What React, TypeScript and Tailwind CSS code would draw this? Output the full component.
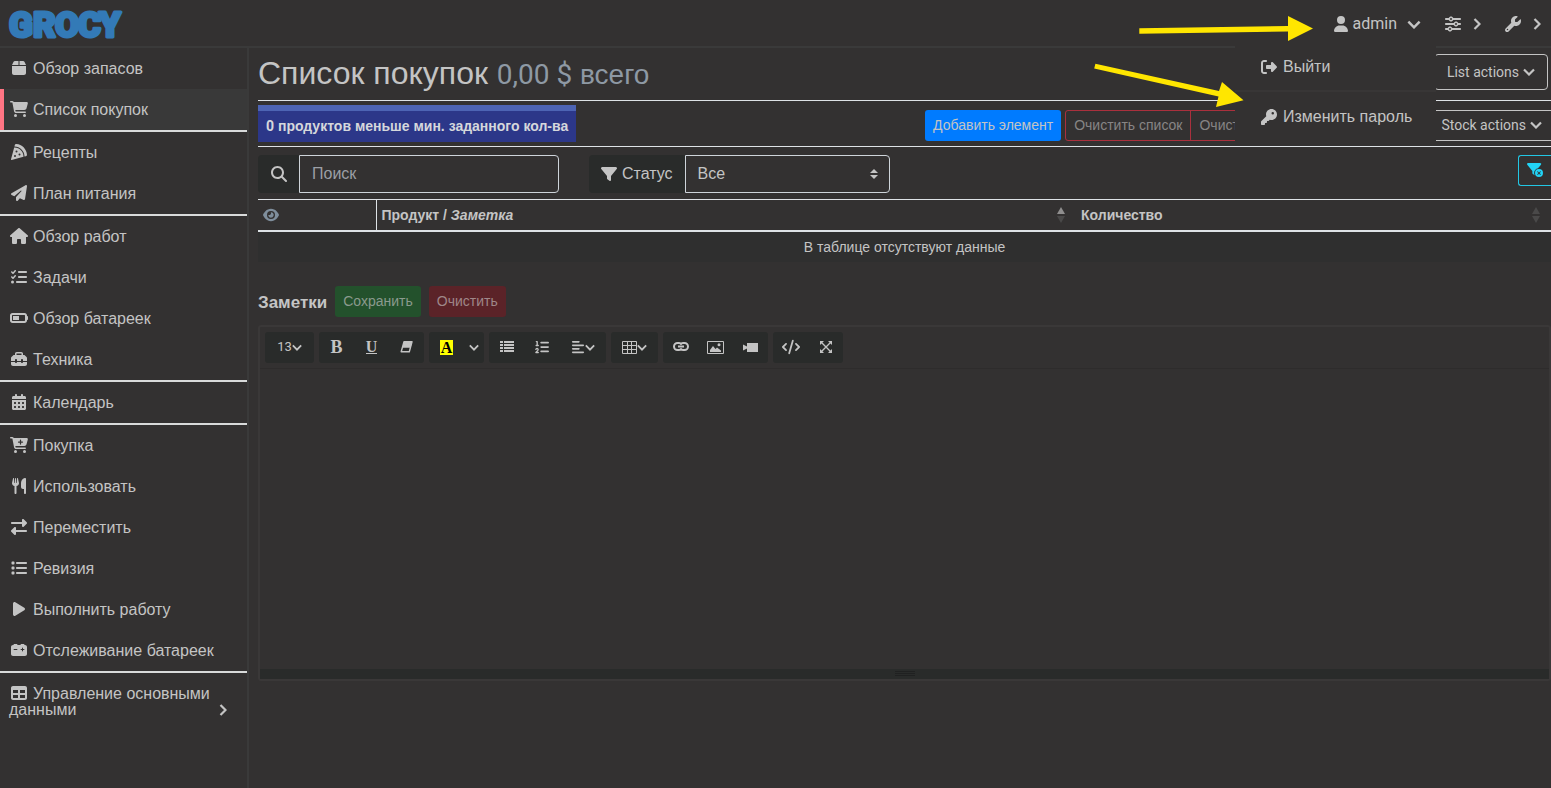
import type { ReactNode } from 'react';
import type { IconType } from 'react-icons';
import {
  FaAlignLeft,
  FaBatteryHalf,
  FaBox,
  FaCalendarDays,
  FaCarBattery,
  FaCartPlus,
  FaCartShopping,
  FaCode,
  FaEye,
  FaFilter,
  FaFilterCircleXmark,
  FaHouse,
  FaKey,
  FaList,
  FaListCheck,
  FaListOl,
  FaMagnifyingGlass,
  FaPaperPlane,
  FaPizzaSlice,
  FaPlay,
  FaRightFromBracket,
  FaRightLeft,
  FaSliders,
  FaTable,
  FaToolbox,
  FaUser,
  FaUtensils,
  FaWrench,
} from 'react-icons/fa6';

type NavItem = { label: string; icon: IconType; active?: boolean };

const navGroups: NavItem[][] = [
  [
    { label: 'Обзор запасов', icon: FaBox },
    { label: 'Список покупок', icon: FaCartShopping, active: true },
  ],
  [
    { label: 'Рецепты', icon: FaPizzaSlice },
    { label: 'План питания', icon: FaPaperPlane },
  ],
  [
    { label: 'Обзор работ', icon: FaHouse },
    { label: 'Задачи', icon: FaListCheck },
    { label: 'Обзор батареек', icon: FaBatteryHalf },
    { label: 'Техника', icon: FaToolbox },
  ],
  [{ label: 'Календарь', icon: FaCalendarDays }],
  [
    { label: 'Покупка', icon: FaCartPlus },
    { label: 'Использовать', icon: FaUtensils },
    { label: 'Переместить', icon: FaRightLeft },
    { label: 'Ревизия', icon: FaList },
    { label: 'Выполнить работу', icon: FaPlay },
    { label: 'Отслеживание батареек', icon: FaCarBattery },
  ],
];

const roboto = "font-['Roboto','Liberation_Sans',sans-serif]";

function Logo() {
  return (
    <svg width="118" height="46" viewBox="0 0 118 46" role="img" aria-label="Grocy" className="block">
      <text
        x="1 25 47 70 91"
        y="37"
        fill="#337ab7"
        stroke="#337ab7"
        strokeWidth="3"
        strokeLinejoin="round"
        className="font-['Roboto',sans-serif] text-[35px] font-black"
      >
        GROCY
      </text>
    </svg>
  );
}

function ChevronDown({ className = 'h-2 w-3' }: { className?: string }) {
  return (
    <svg viewBox="0 0 12 8" fill="none" stroke="currentColor" strokeWidth="2.2" className={`shrink-0 ${className}`} aria-hidden="true">
      <path d="M1 1.500 6 6.500 11 1.500" />
    </svg>
  );
}

function ChevronRight() {
  return (
    <svg viewBox="0 0 8 12" fill="none" stroke="currentColor" strokeWidth="2.2" className="h-3 w-2 shrink-0" aria-hidden="true">
      <path d="M1.500 1 6.500 6 1.500 11" />
    </svg>
  );
}

function Header() {
  return (
    <header className="relative flex h-12 items-center justify-between border-b-2 border-[#3a3a3a] pl-2">
      <a href="#home">
        <Logo />
      </a>
      <nav className={`flex items-center gap-6 pt-0.5 pr-2.5 ${roboto}`}>
        <button type="button" className="flex items-center gap-1">
          <FaUser className="h-4 w-4" />
          <span>admin</span>
          <ChevronDown className="ml-1.5 h-[9px] w-3.5" />
        </button>
        <button type="button" aria-label="Настройки отображения" className="flex items-center gap-3">
          <FaSliders className="h-4 w-4" />
          <ChevronRight />
        </button>
        <button type="button" aria-label="Инструменты" className="flex items-center gap-3">
          <FaWrench className="h-4 w-4" />
          <ChevronRight />
        </button>
      </nav>
      <div className="absolute top-11 right-[115px] z-10 w-[201px] bg-[#333131] pb-0.5">
        <a href="#logout" className="flex h-12 items-center gap-1.5 border-b-2 border-[#383636] pl-[26px]">
          <FaRightFromBracket className="h-4 w-4" />
          Выйти
        </a>
        <a href="#password" className="flex h-[50px] items-center gap-1.5 pl-[26px]">
          <FaKey className="h-4 w-4" />
          Изменить пароль
        </a>
      </div>
    </header>
  );
}

function Sidebar() {
  return (
    <aside className="w-[249px] shrink-0 border-r-2 border-[#3a3a3a]">
      {navGroups.map((group) => (
        <ul key={group[0].label} className="border-b-2 border-[#d9dbdb]">
          {group.map(({ label, icon: Icon, active }) => (
            <li key={label}>
              <a
                href="#nav"
                className={`flex h-[41px] items-center gap-1.5 ${active ? 'border-l-4 border-[#ff7584] bg-[#393939] pl-[6px]' : 'pl-[10px]'}`}
              >
                <span className="flex w-[17px] justify-center pb-px">
                  <Icon className="h-4 w-[18px] shrink-0" />
                </span>
                {label}
              </a>
            </li>
          ))}
        </ul>
      ))}
      <a href="#master-data" className="flex items-end justify-between pt-3 pr-5 pl-[9px] leading-4">
        <span>
          <FaTable className="mr-1.5 ml-0.5 inline h-4 w-4 align-[-2px]" />
          Управление основными данными
        </span>
        <span className="pb-0.5">
          <ChevronRight />
        </span>
      </a>
    </aside>
  );
}

function SortArrows({ up }: { up?: boolean }) {
  return (
    <svg width="8" height="16" viewBox="0 0 8 16" aria-hidden="true">
      <path d="M0 7 4 0 8 7Z" fill={up ? '#8f8e8e' : '#4a4949'} />
      <path d="M0 9 4 16 8 9Z" fill="#4a4949" />
    </svg>
  );
}

function TopBar() {
  return (
    <div className="flex h-[53px] items-center justify-between border-b border-[#dee2e6] pr-[3px]">
      <h2 className="text-[32px] leading-[38px] whitespace-nowrap">
        Список покупок{' '}
        <small className="text-[28px] text-[#8e99a4]">
          <span className={roboto}>0,00 $</span> всего
        </small>
      </h2>
      <button
        type="button"
        className={`mb-1 flex h-9 items-center gap-1 rounded border border-[#c4c4c4] px-3 text-sm ${roboto}`}
      >
        List actions
        <ChevronDown />
      </button>
    </div>
  );
}

function ActionRow() {
  return (
    <div className="flex h-[46px] items-center justify-between border-b border-[#dee2e6]">
      <button
        type="button"
        className="h-[37px] border-t-[6px] border-[#4d64b4] bg-[#2c3789] px-2 pb-0.5 text-sm font-bold whitespace-nowrap text-[#d5d7dc]"
      >
        <span className={roboto}>0</span> продуктов меньше мин. заданного кол-ва
      </button>
      <div className="-mr-1 flex items-center pt-1 text-sm whitespace-nowrap">
        <button type="button" className="mr-1 h-[31px] rounded-[3px] bg-[#007bff] px-2 pb-0.5">
          Добавить элемент
        </button>
        <button
          type="button"
          disabled
          className="h-[31px] rounded-l-[3px] border border-[#aa303d] px-2 pb-0.5 text-[#878585]"
        >
          Очистить список
        </button>
        <button
          type="button"
          disabled
          className="-ml-px h-[31px] w-[243px] border border-[#aa303d] px-2 pb-0.5 text-left text-[#878585]"
        >
          Очистить
        </button>
        <button
          type="button"
          className={`-ml-px flex h-[31px] items-center gap-1 rounded-r-[3px] border border-[#c4c4c4] pr-3 pb-0.5 pl-2 ${roboto}`}
        >
          Stock actions
          <ChevronDown />
        </button>
      </div>
    </div>
  );
}

function Filters() {
  return (
    <div className="flex h-[52px] items-center pt-0.5">
      <div className="flex h-[38px] w-[301px]">
        <label htmlFor="search" aria-label="Поиск" className="flex w-[41px] items-center justify-center rounded-l bg-[#292b2a]">
          <FaMagnifyingGlass className="h-4 w-4" />
        </label>
        <input
          id="search"
          type="text"
          placeholder="Поиск"
          className="min-w-0 flex-1 rounded-r border border-[#ced4da] px-3 placeholder:text-[#9c9fa5]"
        />
      </div>
      <div className="ml-[30px] flex h-[38px] w-[301px]">
        <label htmlFor="status" className="flex items-center gap-[5px] rounded-l bg-[#292b2a] px-3">
          <FaFilter className="h-4 w-4" />
          Статус
        </label>
        <div className="relative flex-1">
          <select id="status" className="h-full w-full appearance-none rounded-r border border-[#ced4da] px-3">
            <option>Все</option>
          </select>
          <svg width="8" height="10" viewBox="0 0 4 5" className="absolute top-[14px] right-3" aria-hidden="true">
            <path fill="#c4c4c4" d="M2 0 0 2h4zm0 5L0 3h4z" />
          </svg>
        </div>
      </div>
      <button
        type="button"
        aria-label="Сбросить фильтр"
        className="mb-2 ml-auto flex h-[31px] w-[33px] items-center justify-center rounded-l-[3px] border border-r-0 border-[#22c7e5] text-[#22d3f5]"
      >
        <FaFilterCircleXmark className="h-4 w-4" />
      </button>
    </div>
  );
}

function ProductTable() {
  return (
    <table className="w-full border-t border-[#dee2e6] text-sm">
      <thead>
        <tr className="h-[31px] border-b-2 border-[#dee2e6] text-left">
          <th className="w-[118px] border-r border-[#dee2e6] px-[5px]">
            <FaEye aria-label="Столбцы" className="h-4 w-4 text-[#7f8e9c]" />
          </th>
          <th className="w-[700px] px-[5px]">
            <div className="flex items-center justify-between pr-1.5">
              <span>
                Продукт / <i>Заметка</i>
              </span>
              <SortArrows up />
            </div>
          </th>
          <th className="px-[5px]">
            <div className="flex items-center justify-between pr-1.5">
              Количество
              <SortArrows />
            </div>
          </th>
        </tr>
      </thead>
      <tbody>
        <tr className="h-[31px] bg-[#2f2f2f]">
          <td colSpan={3} className="text-center">
            В таблице отсутствуют данные
          </td>
        </tr>
      </tbody>
    </table>
  );
}

function ToolGroup({ children }: { children: ReactNode }) {
  return <div className="flex h-[31px] items-center rounded-[3px] bg-[#292b2a]">{children}</div>;
}

function Tool({ label, width = 'w-[35px]', children }: { label: string; width?: string; children: ReactNode }) {
  return (
    <button type="button" aria-label={label} className={`flex h-full items-center justify-center ${width}`}>
      {children}
    </button>
  );
}

function EraserIcon() {
  return (
    <svg width="13" height="12" viewBox="0 0 13 12" aria-hidden="true">
      <path d="M4 .8h8L9.300 10.800H1.200z" fill="none" stroke="#c4c4c4" strokeWidth="1.4" strokeLinejoin="round" />
      <path d="M4 .5h8.200L10.600 6.800H2.300z" fill="#c4c4c4" />
    </svg>
  );
}

function BulletsIcon() {
  return (
    <svg width="14" height="12" viewBox="0 0 14 12" fill="#c4c4c4" aria-hidden="true">
      <path d="M0 0h3v2H0zM4 0h10v2H4zM0 3h3v2H0zM4 3h10v2H4zM0 6h3v2H0zM4 6h10v2H4zM0 9h3v2H0zM4 9h10v2H4z" />
    </svg>
  );
}

function TableIcon() {
  return (
    <svg width="15" height="13" viewBox="0 0 15 13" fill="none" stroke="#c4c4c4" aria-hidden="true">
      <path d="M.5.5h14v12H.5zM5.500 0v13M9.500 0v13M0 4.500h15M0 8.500h15" />
    </svg>
  );
}

function LinkIcon() {
  return (
    <svg width="16" height="10" viewBox="0 0 16 10" fill="none" stroke="#c4c4c4" strokeWidth="2" aria-hidden="true">
      <path d="M8.500 2.500C8 1.500 7 1 6 1H4.500a3.500 3.500 0 0 0 0 7H6c1 0 2-.5 2.500-1.500M7.500 6.500C8 7.500 9 8 10 8h1.500a3.500 3.500 0 0 0 0-7H10c-1 0-2 .5-2.500 1.500M5 4.500h6" />
    </svg>
  );
}

function PictureIcon() {
  return (
    <svg width="17" height="13" viewBox="0 0 17 13" aria-hidden="true">
      <path d="M.5.5h16v12H.5z" fill="none" stroke="#c4c4c4" />
      <path d="M3 11V9l3-4 2.500 3L10 6.500l4 3V11z" fill="#c4c4c4" />
      <circle cx="12" cy="3.800" r="1.500" fill="#c4c4c4" />
    </svg>
  );
}

function VideoIcon() {
  return (
    <svg width="15" height="9" viewBox="0 0 15 9" fill="#c4c4c4" aria-hidden="true">
      <path d="M0 1.500 4 3.500V0h11v9H4V5.500L0 7.500z" />
    </svg>
  );
}

function ExpandIcon() {
  return (
    <svg width="12" height="12" viewBox="0 0 12 12" aria-hidden="true">
      <path d="M1.500 1.500l9 9M10.500 1.500l-9 9" stroke="#c4c4c4" strokeWidth="1.400" />
      <path d="M0 0h4L0 4zM12 0v4L8 0zM0 12V8l4 4zM12 12H8l4-4z" fill="#c4c4c4" />
    </svg>
  );
}

function Editor() {
  return (
    <section className="rounded-[3px] border-2 border-[#3a3838]">
      <div className="flex h-[42px] items-center gap-[5px] border-b border-[#2e2c2c] pl-[5px]">
        <ToolGroup>
          <Tool label="Размер шрифта" width="w-[49px]">
            <span className={`text-[13px] ${roboto}`}>13</span>
            <ChevronDown className="h-[7px] w-2.5" />
          </Tool>
        </ToolGroup>
        <ToolGroup>
          <Tool label="Полужирный">
            <span className="font-['Liberation_Serif',serif] text-lg leading-none font-bold">B</span>
          </Tool>
          <Tool label="Подчёркнутый">
            <span className="border-b border-[#c4c4c4] font-['Liberation_Serif',serif] text-base leading-[13px] font-bold">U</span>
          </Tool>
          <Tool label="Убрать стили шрифта">
            <EraserIcon />
          </Tool>
        </ToolGroup>
        <ToolGroup>
          <Tool label="Последний цвет">
            <span className="bg-[#ffff00] px-px font-['Liberation_Serif',serif] text-base leading-[15px] font-bold text-black">A</span>
          </Tool>
          <Tool label="Ещё цвета" width="w-5">
            <ChevronDown className="h-[7px] w-2.5" />
          </Tool>
        </ToolGroup>
        <ToolGroup>
          <Tool label="Маркированный список">
            <BulletsIcon />
          </Tool>
          <Tool label="Нумерованный список">
            <FaListOl className="h-3.5 w-3.5" />
          </Tool>
          <Tool label="Параграф" width="w-[47px]">
            <FaAlignLeft className="h-3.5 w-3.5" />
            <ChevronDown className="h-[7px] w-2.5" />
          </Tool>
        </ToolGroup>
        <ToolGroup>
          <Tool label="Таблица" width="w-[47px]">
            <TableIcon />
            <ChevronDown className="h-[7px] w-2.5" />
          </Tool>
        </ToolGroup>
        <ToolGroup>
          <Tool label="Ссылка">
            <LinkIcon />
          </Tool>
          <Tool label="Картинка">
            <PictureIcon />
          </Tool>
          <Tool label="Видео">
            <VideoIcon />
          </Tool>
        </ToolGroup>
        <ToolGroup>
          <Tool label="Исходный код">
            <FaCode className="h-4 w-[18px]" />
          </Tool>
          <Tool label="На весь экран">
            <ExpandIcon />
          </Tool>
        </ToolGroup>
      </div>
      <textarea aria-label="Заметки" className="block h-[300px] w-full resize-none" />
      <div className="flex h-[10px] flex-col items-center justify-center gap-px bg-[#292b2a]">
        <span className="h-px w-5 bg-[#202121]" />
        <span className="h-px w-5 bg-[#202121]" />
        <span className="h-px w-5 bg-[#202121]" />
      </div>
    </section>
  );
}

function PointerArrows() {
  return (
    <svg
      width="230"
      height="100"
      viewBox="0 0 230 100"
      fill="#ffe600"
      className="pointer-events-none absolute top-3 right-[231px] z-20"
      aria-hidden="true"
    >
      <path d="M49.300 16.200 198 14V4l25 12.500L198 29V19.500L49.300 21.800z" />
      <path d="M5.400 51.800 129 79l3-9 21.500 18.300L126 95l2.500-10.500L4.200 56.600z" />
    </svg>
  );
}

export default function App() {
  return (
    <div className="relative flex min-h-screen flex-col overflow-hidden bg-[#333131] font-['Liberation_Sans',Arial,sans-serif] text-base text-[#c4c4c4]">
      <Header />
      <div className="flex flex-1">
        <Sidebar />
        <main className="min-w-0 flex-1 pl-[9px]">
          <TopBar />
          <ActionRow />
          <Filters />
          <ProductTable />
          <div className="mt-6 mb-2 flex h-[31px] items-center gap-2 text-sm">
            <h3 className="pt-1 text-[17px] font-bold">Заметки</h3>
            <button type="button" disabled className="h-[31px] rounded-[3px] bg-[#23512c] px-2 text-[#8b9a8e]">
              Сохранить
            </button>
            <button type="button" disabled className="h-[31px] rounded-[3px] bg-[#5b2328] px-2 text-[#9f8789]">
              Очистить
            </button>
          </div>
          <Editor />
        </main>
      </div>
      <PointerArrows />
    </div>
  );
}
